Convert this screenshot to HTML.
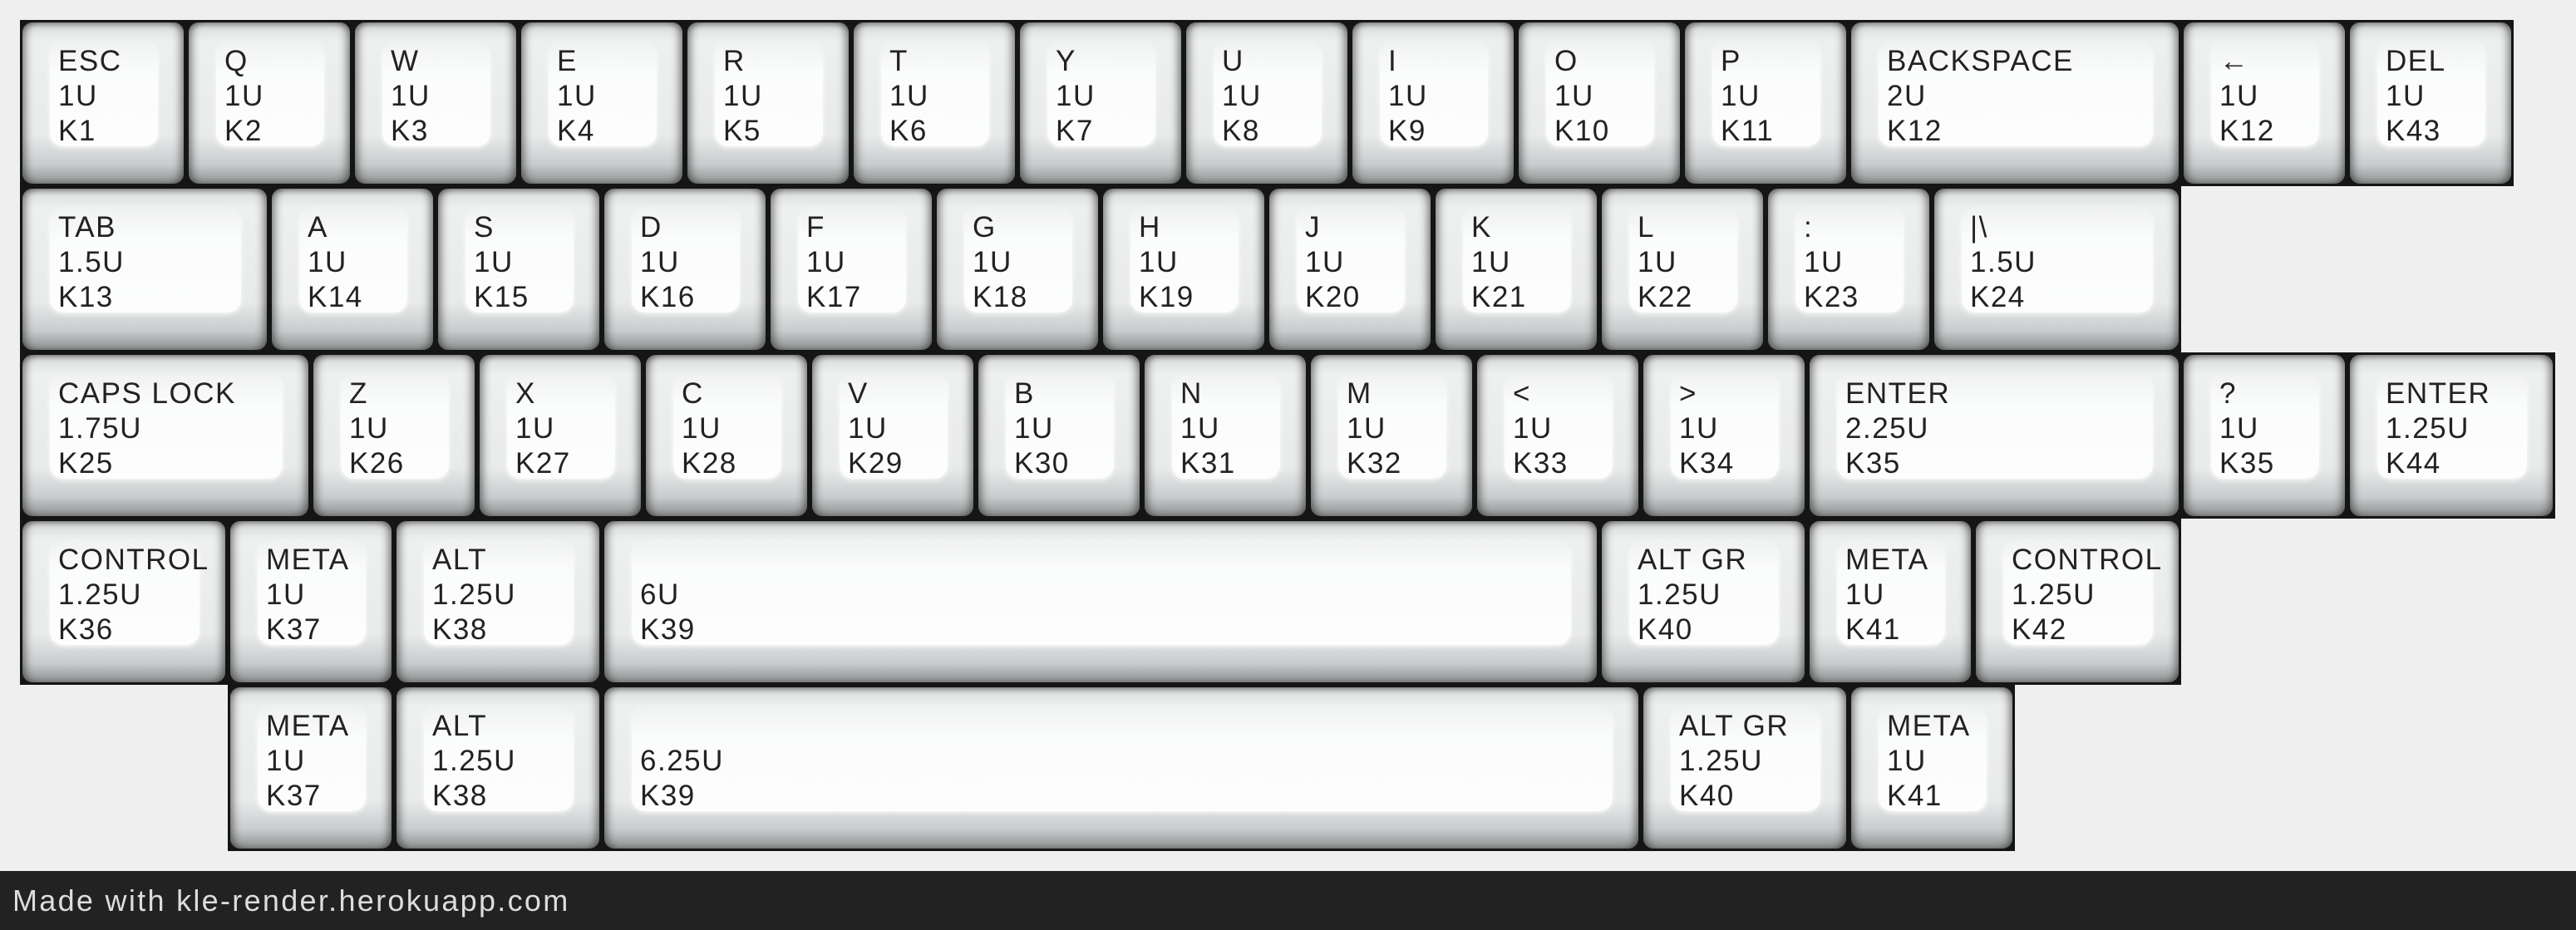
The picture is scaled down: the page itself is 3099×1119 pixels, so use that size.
<!DOCTYPE html>
<html><head><meta charset="utf-8"><style>
body{margin:0;width:3099px;height:1119px;background:#efefef;position:relative;overflow:hidden;font-family:"Liberation Sans",sans-serif}
.k{position:absolute;height:200px;background:#151515}
.c{position:absolute;left:3px;top:3px;right:3px;bottom:3px;border-radius:12px;
background:linear-gradient(180deg,#d8dadb 0%,#eef0f0 12%,#e9ebeb 70%,#c9cccd 88%,#8d9090 100%);
box-shadow:inset 8px 0 10px -4px rgba(0,0,0,.45),inset -8px 0 10px -4px rgba(0,0,0,.45),inset 0 6px 8px -4px rgba(0,0,0,.35)}
.f{position:absolute;left:33px;top:23px;right:31px;bottom:45px;border-radius:16px;
background:linear-gradient(180deg,#f0f1f1 0%,#fbfcfc 30%,#fdfdfd 100%);box-shadow:0 2px 6px rgba(255,255,255,.8)}
.t{position:absolute;left:46px;top:29px;font-size:35px;letter-spacing:1.5px;line-height:42px;color:#222;white-space:nowrap}
.foot{position:absolute;left:0;top:1048px;width:3099px;height:71px;background:#222;color:#ddd;font-size:36px;letter-spacing:2.3px;line-height:71px;padding-left:15px;box-sizing:border-box}
</style></head><body>
<div class="k" style="left:24px;top:24px;width:200px"><div class="c"><div class="f"></div></div><div class="t">ESC<br>1U<br>K1</div></div>
<div class="k" style="left:224px;top:24px;width:200px"><div class="c"><div class="f"></div></div><div class="t">Q<br>1U<br>K2</div></div>
<div class="k" style="left:424px;top:24px;width:200px"><div class="c"><div class="f"></div></div><div class="t">W<br>1U<br>K3</div></div>
<div class="k" style="left:624px;top:24px;width:200px"><div class="c"><div class="f"></div></div><div class="t">E<br>1U<br>K4</div></div>
<div class="k" style="left:824px;top:24px;width:200px"><div class="c"><div class="f"></div></div><div class="t">R<br>1U<br>K5</div></div>
<div class="k" style="left:1024px;top:24px;width:200px"><div class="c"><div class="f"></div></div><div class="t">T<br>1U<br>K6</div></div>
<div class="k" style="left:1224px;top:24px;width:200px"><div class="c"><div class="f"></div></div><div class="t">Y<br>1U<br>K7</div></div>
<div class="k" style="left:1424px;top:24px;width:200px"><div class="c"><div class="f"></div></div><div class="t">U<br>1U<br>K8</div></div>
<div class="k" style="left:1624px;top:24px;width:200px"><div class="c"><div class="f"></div></div><div class="t">I<br>1U<br>K9</div></div>
<div class="k" style="left:1824px;top:24px;width:200px"><div class="c"><div class="f"></div></div><div class="t">O<br>1U<br>K10</div></div>
<div class="k" style="left:2024px;top:24px;width:200px"><div class="c"><div class="f"></div></div><div class="t">P<br>1U<br>K11</div></div>
<div class="k" style="left:2224px;top:24px;width:400px"><div class="c"><div class="f"></div></div><div class="t">BACKSPACE<br>2U<br>K12</div></div>
<div class="k" style="left:2624px;top:24px;width:200px"><div class="c"><div class="f"></div></div><div class="t">←<br>1U<br>K12</div></div>
<div class="k" style="left:2824px;top:24px;width:200px"><div class="c"><div class="f"></div></div><div class="t">DEL<br>1U<br>K43</div></div>

<div class="k" style="left:24px;top:224px;width:300px"><div class="c"><div class="f"></div></div><div class="t">TAB<br>1.5U<br>K13</div></div>
<div class="k" style="left:324px;top:224px;width:200px"><div class="c"><div class="f"></div></div><div class="t">A<br>1U<br>K14</div></div>
<div class="k" style="left:524px;top:224px;width:200px"><div class="c"><div class="f"></div></div><div class="t">S<br>1U<br>K15</div></div>
<div class="k" style="left:724px;top:224px;width:200px"><div class="c"><div class="f"></div></div><div class="t">D<br>1U<br>K16</div></div>
<div class="k" style="left:924px;top:224px;width:200px"><div class="c"><div class="f"></div></div><div class="t">F<br>1U<br>K17</div></div>
<div class="k" style="left:1124px;top:224px;width:200px"><div class="c"><div class="f"></div></div><div class="t">G<br>1U<br>K18</div></div>
<div class="k" style="left:1324px;top:224px;width:200px"><div class="c"><div class="f"></div></div><div class="t">H<br>1U<br>K19</div></div>
<div class="k" style="left:1524px;top:224px;width:200px"><div class="c"><div class="f"></div></div><div class="t">J<br>1U<br>K20</div></div>
<div class="k" style="left:1724px;top:224px;width:200px"><div class="c"><div class="f"></div></div><div class="t">K<br>1U<br>K21</div></div>
<div class="k" style="left:1924px;top:224px;width:200px"><div class="c"><div class="f"></div></div><div class="t">L<br>1U<br>K22</div></div>
<div class="k" style="left:2124px;top:224px;width:200px"><div class="c"><div class="f"></div></div><div class="t">:<br>1U<br>K23</div></div>
<div class="k" style="left:2324px;top:224px;width:300px"><div class="c"><div class="f"></div></div><div class="t">|\<br>1.5U<br>K24</div></div>

<div class="k" style="left:24px;top:424px;width:350px"><div class="c"><div class="f"></div></div><div class="t">CAPS LOCK<br>1.75U<br>K25</div></div>
<div class="k" style="left:374px;top:424px;width:200px"><div class="c"><div class="f"></div></div><div class="t">Z<br>1U<br>K26</div></div>
<div class="k" style="left:574px;top:424px;width:200px"><div class="c"><div class="f"></div></div><div class="t">X<br>1U<br>K27</div></div>
<div class="k" style="left:774px;top:424px;width:200px"><div class="c"><div class="f"></div></div><div class="t">C<br>1U<br>K28</div></div>
<div class="k" style="left:974px;top:424px;width:200px"><div class="c"><div class="f"></div></div><div class="t">V<br>1U<br>K29</div></div>
<div class="k" style="left:1174px;top:424px;width:200px"><div class="c"><div class="f"></div></div><div class="t">B<br>1U<br>K30</div></div>
<div class="k" style="left:1374px;top:424px;width:200px"><div class="c"><div class="f"></div></div><div class="t">N<br>1U<br>K31</div></div>
<div class="k" style="left:1574px;top:424px;width:200px"><div class="c"><div class="f"></div></div><div class="t">M<br>1U<br>K32</div></div>
<div class="k" style="left:1774px;top:424px;width:200px"><div class="c"><div class="f"></div></div><div class="t">&lt;<br>1U<br>K33</div></div>
<div class="k" style="left:1974px;top:424px;width:200px"><div class="c"><div class="f"></div></div><div class="t">&gt;<br>1U<br>K34</div></div>
<div class="k" style="left:2174px;top:424px;width:450px"><div class="c"><div class="f"></div></div><div class="t">ENTER<br>2.25U<br>K35</div></div>
<div class="k" style="left:2624px;top:424px;width:200px"><div class="c"><div class="f"></div></div><div class="t">?<br>1U<br>K35</div></div>
<div class="k" style="left:2824px;top:424px;width:250px"><div class="c"><div class="f"></div></div><div class="t">ENTER<br>1.25U<br>K44</div></div>

<div class="k" style="left:24px;top:624px;width:250px"><div class="c"><div class="f"></div></div><div class="t">CONTROL<br>1.25U<br>K36</div></div>
<div class="k" style="left:274px;top:624px;width:200px"><div class="c"><div class="f"></div></div><div class="t">META<br>1U<br>K37</div></div>
<div class="k" style="left:474px;top:624px;width:250px"><div class="c"><div class="f"></div></div><div class="t">ALT<br>1.25U<br>K38</div></div>
<div class="k" style="left:724px;top:624px;width:1200px"><div class="c"><div class="f"></div></div><div class="t">&nbsp;<br>6U<br>K39</div></div>
<div class="k" style="left:1924px;top:624px;width:250px"><div class="c"><div class="f"></div></div><div class="t">ALT GR<br>1.25U<br>K40</div></div>
<div class="k" style="left:2174px;top:624px;width:200px"><div class="c"><div class="f"></div></div><div class="t">META<br>1U<br>K41</div></div>
<div class="k" style="left:2374px;top:624px;width:250px"><div class="c"><div class="f"></div></div><div class="t">CONTROL<br>1.25U<br>K42</div></div>

<div class="k" style="left:274px;top:824px;width:200px"><div class="c"><div class="f"></div></div><div class="t">META<br>1U<br>K37</div></div>
<div class="k" style="left:474px;top:824px;width:250px"><div class="c"><div class="f"></div></div><div class="t">ALT<br>1.25U<br>K38</div></div>
<div class="k" style="left:724px;top:824px;width:1250px"><div class="c"><div class="f"></div></div><div class="t">&nbsp;<br>6.25U<br>K39</div></div>
<div class="k" style="left:1974px;top:824px;width:250px"><div class="c"><div class="f"></div></div><div class="t">ALT GR<br>1.25U<br>K40</div></div>
<div class="k" style="left:2224px;top:824px;width:200px"><div class="c"><div class="f"></div></div><div class="t">META<br>1U<br>K41</div></div>

<div class="foot">Made with kle-render.herokuapp.com</div>
</body></html>
